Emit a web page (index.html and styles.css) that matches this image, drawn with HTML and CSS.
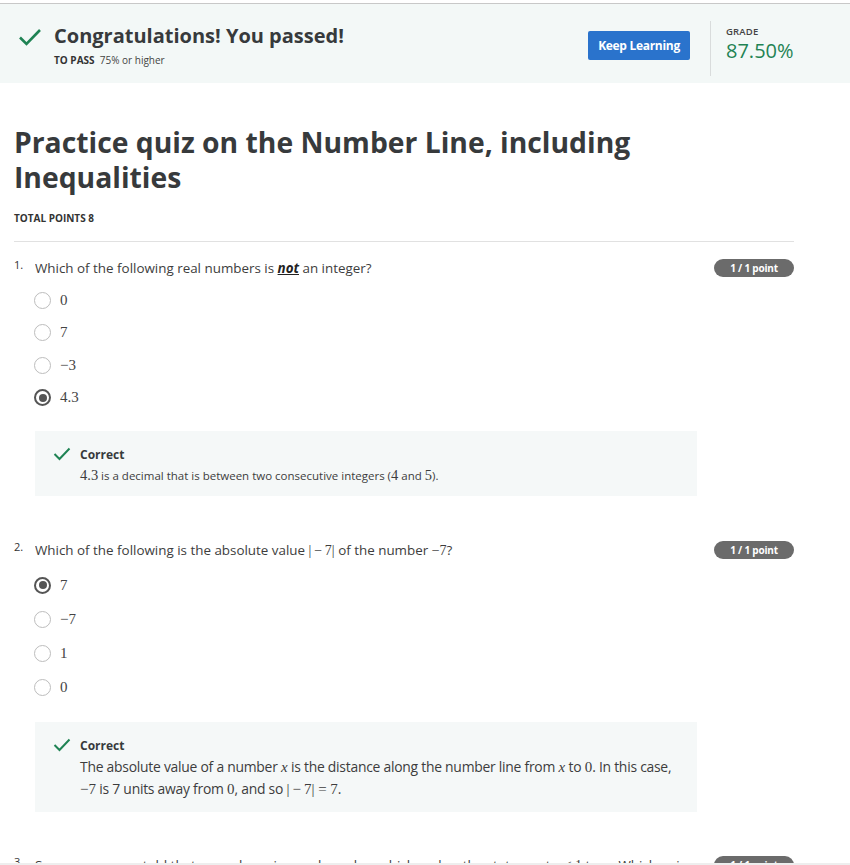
FILE: index.html
```html
<!DOCTYPE html>
<html>
<head>
<meta charset="utf-8">
<link rel="stylesheet" href="styles.css">
</head>
<body>
<div class="topline"></div>
<header class="banner">
  <div class="banner-left">
    <svg class="banner-check" width="24" height="20" viewBox="0 0 24 20"><path d="M2 10.5 L8.5 17 L22 3" fill="none" stroke="#1f8354" stroke-width="2.6"/></svg>
    <div class="banner-text">
      <div class="banner-title">Congratulations! You passed!</div>
      <div class="banner-sub"><b>TO PASS</b>&nbsp; 75% or higher</div>
    </div>
  </div>
  <button class="keep-btn">Keep Learning</button>
  <div class="divider"></div>
  <div class="grade">
    <div class="grade-label">GRADE</div>
    <div class="grade-value">87.50%</div>
  </div>
</header>

<main class="content">
  <h1 class="quiz-title">Practice quiz on the Number Line, including Inequalities</h1>
  <div class="total">TOTAL POINTS 8</div>
  <hr class="rule">

  <section class="question">
    <div class="q-head">
      <span class="q-num">1.</span>
      <span class="q-text">Which of the following real numbers is <b><i><u>not</u></i></b> an integer?</span>
      <span class="badge">1 / 1 point</span>
    </div>
    <ul class="options">
      <li><span class="radio"></span><span class="math">0</span></li>
      <li><span class="radio"></span><span class="math">7</span></li>
      <li><span class="radio"></span><span class="math">−3</span></li>
      <li><span class="radio checked"></span><span class="math">4.3</span></li>
    </ul>
    <div class="feedback">
      <svg class="fb-check" width="18" height="14" viewBox="0 0 18 14"><path d="M1.5 7 L6.5 12 L16.5 1.5" fill="none" stroke="#1f8354" stroke-width="2"/></svg>
      <div class="fb-body">
        <div class="fb-title">Correct</div>
        <div class="fb-text"><span class="math">4.3</span> is a decimal that is between two consecutive integers (<span class="math">4</span> and <span class="math">5</span>).</div>
      </div>
    </div>
  </section>

  <section class="question q2">
    <div class="q-head">
      <span class="q-num">2.</span>
      <span class="q-text">Which of the following is the absolute value <span class="math">|&thinsp;−&thinsp;7|</span> of the number <span class="math">−7</span>?</span>
      <span class="badge">1 / 1 point</span>
    </div>
    <ul class="options">
      <li><span class="radio checked"></span><span class="math">7</span></li>
      <li><span class="radio"></span><span class="math">−7</span></li>
      <li><span class="radio"></span><span class="math">1</span></li>
      <li><span class="radio"></span><span class="math">0</span></li>
    </ul>
    <div class="feedback fb2">
      <svg class="fb-check" width="18" height="14" viewBox="0 0 18 14"><path d="M1.5 7 L6.5 12 L16.5 1.5" fill="none" stroke="#1f8354" stroke-width="2"/></svg>
      <div class="fb-body">
        <div class="fb-title">Correct</div>
        <div class="fb-text fb-text2">The absolute value of a number <span class="math"><i>x</i></span> is the distance along the number line from <span class="math"><i>x</i></span> to <span class="math">0</span>. In this case,<br><span class="math">−7</span> is 7 units away from <span class="math">0</span>, and so <span class="math">|&thinsp;−&thinsp;7| = 7</span>.</div>
      </div>
    </div>
  </section>

  <section class="question q3">
    <div class="q-head">
      <span class="q-num">3.</span>
      <span class="q-text">Suppose you are told that a number <span class="math"><i>x</i></span> is a real number which makes the statement <span class="math"><i>x</i> &lt; 1</span> true. Which pair of</span>
      <span class="badge">1 / 1 point</span>
    </div>
  </section>
</main>
<div class="bottom-bar"></div>
</body>
</html>
```

FILE: styles.css
```css
* { box-sizing: border-box; }
html, body { margin: 0; padding: 0; background: #fff; }
body {
  font-family: "Open Sans", "Liberation Sans", sans-serif;
  color: #373a3c;
  width: 850px;
  height: 865px;
  overflow: hidden;
  position: relative;
}
.topline {
  height: 4px;
  border-bottom: 1px solid #c8c8c8;
}
.banner {
  height: 79px;
  background: #f3f8f7;
  display: flex;
  align-items: center;
  padding-left: 18px;
}
.banner-left {
  flex: 1;
  display: flex;
  align-items: flex-start;
  margin-top: 3px;
}
.banner-check { margin-top: 4px; margin-right: 12px; flex-shrink: 0; }
.banner-title {
  font-size: 20px;
  font-weight: 700;
  line-height: 26px;
  color: #373a3c;
}
.banner-sub {
  font-size: 10px;
  color: #444;
  margin-top: 4px;
}
.banner-sub b { font-weight: 700; color: #333; }
.keep-btn {
  width: 102px;
  height: 29px;
  background: #2a73cc;
  color: #fff;
  border: none;
  border-radius: 2px;
  font-family: "Open Sans", sans-serif;
  font-weight: 700;
  font-size: 12px;
  letter-spacing: -0.3px;
  margin-right: 20px;
  margin-top: 3px;
  padding: 0;
}
.divider {
  width: 1px;
  height: 55px;
  background: #d9dcdc;
  margin-top: 9px;
}
.grade {
  width: 139px;
  padding-left: 15px;
  margin-top: 2px;
}
.grade-label {
  font-size: 9.5px;
  font-weight: 600;
  color: #444;
  letter-spacing: 0.2px;
}
.grade-value {
  font-size: 20px;
  color: #1f8354;
  line-height: 26px;
}

.content {
  padding: 0 56px 0 14px;
}
.quiz-title {
  margin: 42px 0 0;
  font-size: 28.3px;
  line-height: 35px;
  font-weight: 700;
  color: #373a3c;
  width: 640px;
}
.total {
  font-size: 10px;
  font-weight: 700;
  color: #333;
  margin-top: 16px;
}
.rule {
  border: none;
  border-top: 1px solid #e1e1e1;
  margin: 16px 0 0;
}
.question { margin-top: 16px; }
.q-head {
  display: flex;
  align-items: center;
  height: 20px;
}
.q-num {
  width: 21px;
  font-size: 11px;
  color: #333;
  align-self: flex-start;
  margin-top: -1px;
}
.q-text {
  flex: 1;
  font-size: 13.4px;
  color: #3d3d3d;
  white-space: nowrap;
  overflow: hidden;
}
.q-text b { color: #222; }
.badge {
  width: 80px;
  height: 18px;
  border-radius: 9px;
  background: #6b6b6b;
  color: #fff;
  font-size: 10px;
  font-weight: 700;
  text-align: center;
  line-height: 18px;
  letter-spacing: -0.2px;
  margin-left: 20px;
  flex-shrink: 0;
}
.math {
  font-family: "Liberation Serif", "DejaVu Serif", serif;
  font-size: 14px;
}
.options {
  list-style: none;
  margin: 6px 0 0 20px;
  padding: 0;
}
.options li {
  display: flex;
  align-items: center;
  height: 32.5px;
  color: #444;
}
.q2 .options { margin-top: 8px; }
.q2 .options li { height: 34px; }
.options .math { font-size: 15px; color: #444; }
.radio {
  width: 17px;
  height: 17px;
  border-radius: 50%;
  border: 1.6px solid #bdbdbd;
  margin-right: 9px;
  display: flex;
  align-items: center;
  justify-content: center;
}
.radio.checked { border: 2px solid #555; }
.radio.checked::after {
  content: "";
  width: 8px;
  height: 8px;
  border-radius: 50%;
  background: #555;
}
.feedback {
  margin: 17px 0 0 21px;
  width: 662px;
  background: #f5f8f8;
  display: flex;
  align-items: flex-start;
  padding: 15px 0 10px 18px;
}
.fb2 { margin-top: 18px; padding-bottom: 12px; }
.fb-check { margin-top: 1px; margin-right: 9px; flex-shrink: 0; }
.fb-title {
  font-size: 12px;
  font-weight: 700;
  color: #373a3c;
  line-height: 17px;
}
.fb-text {
  font-size: 11.5px;
  color: #3d3d3d;
  margin-top: 2px;
  line-height: 21px;
}
.fb-text .math { font-size: 14.5px; }
.fb-text2 { font-size: 13.9px; letter-spacing: -0.25px; white-space: nowrap; }
.fb-text2 .math { font-size: 15px; letter-spacing: 0; }
.q2 { margin-top: 44px; }
.q3 { margin-top: 43px; }
.bottom-bar {
  position: absolute;
  left: 0;
  right: 0;
  bottom: 0;
  height: 2px;
  background: #eeeeee;
}
```
